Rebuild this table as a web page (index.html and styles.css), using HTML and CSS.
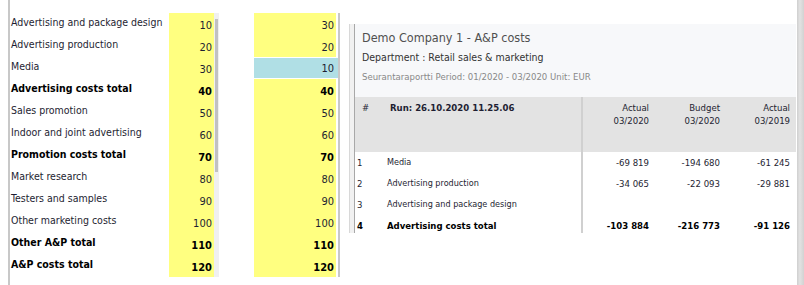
FILE: index.html
```html
<!DOCTYPE html>
<html lang="en">
<head>
  <meta charset="UTF-8"/>
  <title>A&amp;P costs</title>
  <link rel="stylesheet" href="styles.css">
</head>
<body>
  <div class="screen">
    <!-- Account list with first value column -->
    <div class="list">
      <div class="labels">
        <div class="row">Advertising and package design</div>
        <div class="row">Advertising production</div>
        <div class="row">Media</div>
        <div class="row total">Advertising costs total</div>
        <div class="row">Sales promotion</div>
        <div class="row">Indoor and joint advertising</div>
        <div class="row total">Promotion costs total</div>
        <div class="row">Market research</div>
        <div class="row">Testers and samples</div>
        <div class="row">Other marketing costs</div>
        <div class="row total">Other A&amp;P total</div>
        <div class="row total">A&amp;P costs total</div>
      </div>
      <div class="values values-a">
        <div class="row">10</div>
        <div class="row">20</div>
        <div class="row">30</div>
        <div class="row total">40</div>
        <div class="row">50</div>
        <div class="row">60</div>
        <div class="row total">70</div>
        <div class="row">80</div>
        <div class="row">90</div>
        <div class="row">100</div>
        <div class="row total">110</div>
        <div class="row total">120</div>
      </div>
      <div class="vscroll"><div class="thumb"></div></div>
    </div>

    <!-- Second value column -->
    <div class="values values-b">
      <div class="row">30</div>
      <div class="row">20</div>
      <div class="row selected">10</div>
      <div class="row total">40</div>
      <div class="row">50</div>
      <div class="row">60</div>
      <div class="row total">70</div>
      <div class="row">80</div>
      <div class="row">90</div>
      <div class="row">100</div>
      <div class="row total">110</div>
      <div class="row total">120</div>
    </div>

    <!-- Report preview -->
    <div class="report">
      <div class="report-inner">
        <div class="report-head">
          <div class="report-title">Demo Company 1 - A&amp;P costs</div>
          <div class="report-dept">Department : Retail sales &amp; marketing</div>
          <div class="report-period">Seurantaraportti Period: 01/2020 - 03/2020 Unit: EUR</div>
        </div>
        <div class="grid grid-head">
          <div class="cell num">#</div>
          <div class="cell name">Run: 26.10.2020 11.25.06</div>
          <div class="cell amt split">Actual<br>03/2020</div>
          <div class="cell amt">Budget<br>03/2020</div>
          <div class="cell amt">Actual<br>03/2019</div>
          <div class="cell"></div>
        </div>
        <div class="grid grid-body">
          <div class="cell num">1</div>
          <div class="cell name">Media</div>
          <div class="cell amt split">-69 819</div>
          <div class="cell amt">-194 680</div>
          <div class="cell amt">-61 245</div>
          <div class="cell"></div>

          <div class="cell num">2</div>
          <div class="cell name">Advertising production</div>
          <div class="cell amt split">-34 065</div>
          <div class="cell amt">-22 093</div>
          <div class="cell amt">-29 881</div>
          <div class="cell"></div>

          <div class="cell num">3</div>
          <div class="cell name">Advertising and package design</div>
          <div class="cell amt split"></div>
          <div class="cell amt"></div>
          <div class="cell amt"></div>
          <div class="cell"></div>

          <div class="cell num total">4</div>
          <div class="cell name total">Advertising costs total</div>
          <div class="cell amt split total">-103 884</div>
          <div class="cell amt total">-216 773</div>
          <div class="cell amt total">-91 126</div>
          <div class="cell"></div>
        </div>
      </div>
    </div>

    <div class="page-scroll"></div>
  </div>
</body>
</html>
```

FILE: styles.css
```css
:root {
  --yellow: #ffff80;
  --selected: #b0dfe5;
  --line: #c8c8c8;
  --text: #1e1e32;
  --row: 22px;
}

* {
  margin: 0;
  padding: 0;
  box-sizing: border-box;
}

body {
  font-family: "DejaVu Sans Condensed", "Liberation Sans", sans-serif;
  color: var(--text);
  background: #fff;
  width: 804px;
  height: 285px;
  overflow: hidden;
}

.screen {
  display: flex;
  height: 285px;
}

/*—— LEFT LIST ——*/
.list {
  display: flex;
  margin-left: 8px;
  border-left: 2px solid var(--line);
  padding-top: 13px;
  height: 285px;
  align-items: flex-start;
}
.row {
  height: var(--row);
  line-height: var(--row);
  font-size: 11px;
  white-space: nowrap;
}
.row.total {
  font-weight: bold;
  color: #000;
}
.labels {
  width: 159px;
  padding-left: 1px;
}
.labels .row {
  line-height: 19px;
  font-size: 10.5px;
}
.values {
  background: var(--yellow);
  text-align: right;
}
.values .row {
  padding-top: 2px;
}
.values-a {
  width: 45px;
  padding-right: 2px;
}
.vscroll {
  width: 5px;
  height: 264px;
  background: #f0f0f0;
  padding-top: 6px;
}
.vscroll .thumb {
  margin-left: 1px;
  width: 3px;
  height: 153px;
  background: #c1c1c1;
}

/*—— SECOND COLUMN ——*/
.values-b {
  width: 86px;
  margin: 13px 0 0 35px;
  height: 264px;
  padding-right: 4px;
  border-right: 2px solid var(--line);
  box-shadow: inset -2px 0 0 #fff;
}
.values-b .row.selected {
  background: var(--selected);
  border-top: 1px solid #fff;
  border-bottom: 1px solid #fff;
  margin-right: -4px;
  padding-right: 4px;
  line-height: 18px;
}

/*—— REPORT PREVIEW ——*/
.report {
  margin: 24px 0 0 9px;
  width: 447px;
  height: 209px;
  overflow: hidden;
  border-left: 1px solid #d8d8d8;
  background: #f1f1f1;
}
.report-inner {
  margin-left: 4px;
  border-left: 1px solid #a8a8a8;
  background: #fff;
  height: 100%;
}
.report-head {
  height: 73px;
  background: #f7f8fa;
  padding: 5px 0 0 7px;
}
.report-title {
  font-size: 12.5px;
  color: #505050;
  line-height: 17px;
}
.report-dept {
  font-size: 10.5px;
  color: #333;
  margin-top: 3px;
  line-height: 16px;
}
.report-period {
  font-size: 9.5px;
  color: #888;
  margin-top: 4px;
  line-height: 15px;
}

.grid {
  display: grid;
  grid-template-columns: 32px 194px 68px 71px 70px 6px;
  font-size: 9.5px;
}
.grid-head {
  background: #e3e3e3;
  height: 55px;
  line-height: 13px;
}
.grid-head .cell {
  padding-top: 4px;
}
.grid-head .num {
  padding-left: 7px;
}
.grid-head .name {
  padding-left: 3px;
  font-weight: bold;
}
.grid-body .cell {
  height: 21px;
  line-height: 21px;
}
.grid-body .name {
  font-size: 9px;
}
.grid-body .name.total {
  font-size: 9.5px;
}
.grid-body .num {
  padding-left: 2px;
}
.cell.amt {
  text-align: right;
}
.cell.split {
  border-left: 2px solid #d0d0d0;
}
.cell.total {
  font-weight: bold;
  color: #000;
}

/*—— PAGE SCROLLBAR ——*/
.page-scroll {
  margin-left: 1px;
  width: 7px;
  height: 285px;
  background: linear-gradient(90deg, #cfcfcf, #e2e2e2 40%, #d2d2d2);
}
```
